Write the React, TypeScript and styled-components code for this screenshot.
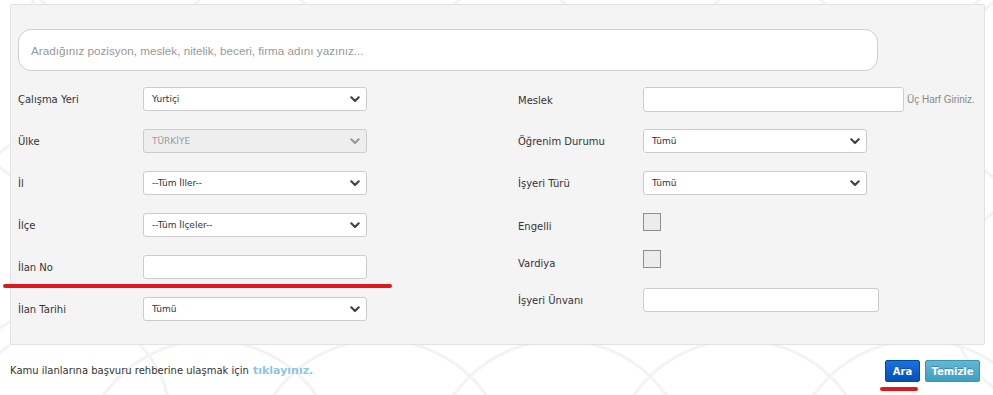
import React from "react";
import styled, { createGlobalStyle } from "styled-components";

const Global = createGlobalStyle`
  html, body { margin: 0; padding: 0; background: #ffffff; }
  body { font-family: "DejaVu Sans", Verdana, sans-serif; color: #333; }
  * { box-sizing: border-box; }
`;

const Page = styled.div`
  position: relative;
  width: 993px;
  height: 395px;
  overflow: hidden;
  background: #ffffff;
`;

const Pattern = styled.svg`
  position: absolute;
  inset: 0;
  z-index: 0;
  pointer-events: none;
`;

const Content = styled.div`
  position: relative;
  z-index: 1;
  padding-top: 4px;
`;

const Panel = styled.div`
  position: relative;
  margin-left: 10px;
  width: 975px;
  background: #f4f4f4;
  border: 1px solid #e2e2e2;
  border-radius: 2px;
  padding: 24px 7px 23px 7px;
`;

const Search = styled.input`
  display: block;
  width: 860px;
  height: 42px;
  border: 1px solid #cfcfcf;
  border-radius: 13px;
  background: #fff;
  padding: 0 12px;
  font-family: "Liberation Sans", Arial, sans-serif;
  font-size: 11.7px;
  color: #333;
  outline: none;
  &::placeholder { color: #999; }
`;

const Grid = styled.div`
  display: grid;
  grid-template-columns: 500px 1fr;
  margin-top: 16px;
`;

const Column = styled.div`
  display: flex;
  flex-direction: column;
`;

const Row = styled.div<{ $h: number; $mb: number; $top?: boolean }>`
  display: flex;
  align-items: ${(p) => (p.$top ? "flex-start" : "center")};
  height: ${(p) => p.$h}px;
  margin-bottom: ${(p) => p.$mb}px;
`;

const Label = styled.label<{ $shift?: number }>`
  width: 125px;
  flex: none;
  font-size: 10px;
  color: #333;
  padding-top: ${(p) => p.$shift ?? 2}px;
  line-height: 12px;
  white-space: nowrap;
`;

const SelectBox = styled.div<{ $w: number; $disabled?: boolean }>`
  position: relative;
  display: flex;
  align-items: center;
  width: ${(p) => p.$w}px;
  height: 24px;
  border: 1px solid #cccccc;
  border-radius: 3px;
  background: ${(p) => (p.$disabled ? "#eeeeee" : "#ffffff")};
  padding-left: 8px;
  font-size: 9px;
  color: ${(p) => (p.$disabled ? "#9a9a9a" : "#333")};
`;

const Chevron = styled.svg<{ $disabled?: boolean }>`
  position: absolute;
  right: 6px;
  top: 8px;
  width: 10px;
  height: 7px;
  stroke: ${(p) => (p.$disabled ? "#9a9a9a" : "#444")};
`;

const TextInput = styled.input<{ $w: number; $h?: number }>`
  width: ${(p) => p.$w}px;
  height: ${(p) => p.$h ?? 24}px;
  border: 1px solid #cccccc;
  border-radius: 3px;
  background: #fff;
  outline: none;
  padding: 0 6px;
`;

const Hint = styled.span`
  margin-left: 3px;
  font-family: "Liberation Sans", Arial, sans-serif;
  font-size: 10px;
  color: #888;
`;

const Check = styled.div`
  width: 18px;
  height: 18px;
  border: 1px solid #8f8f8f;
  background: #ececec;
  flex: none;
`;

const Mark = styled.div<{ $w: number; $l: number; $t: number }>`
  position: absolute;
  left: ${(p) => p.$l}px;
  top: ${(p) => p.$t}px;
  width: ${(p) => p.$w}px;
  height: 4px;
  border-radius: 2px;
  background: #e0181c;
  z-index: 5;
`;

const Footer = styled.div`
  display: flex;
  align-items: center;
  justify-content: space-between;
  height: 50px;
  padding: 0 13px 0 10px;
`;

const FooterText = styled.div`
  font-size: 10px;
  color: #333;
  display: flex;
  align-items: baseline;
  gap: 4px;
`;

const Link = styled.a`
  font-size: 11px;
  font-weight: bold;
  color: #8fc6e2;
  text-decoration: none;
`;

const Buttons = styled.div`
  display: flex;
  gap: 5px;
  margin-top: 2px;
`;

const Button = styled.button<{ $kind: "primary" | "info"; $w: number }>`
  width: ${(p) => p.$w}px;
  height: 22px;
  border-radius: 2px;
  border: 1px solid ${(p) => (p.$kind === "primary" ? "#0048a8" : "#3a95b5")};
  background: ${(p) =>
    p.$kind === "primary"
      ? "linear-gradient(#1a72dc, #0250b8)"
      : "linear-gradient(#62b8d4, #3d9ec0)"};
  color: #fff;
  font-family: "DejaVu Sans", Verdana, sans-serif;
  font-size: 10px;
  font-weight: bold;
  padding: 0;
  text-shadow: 0 -1px 0 rgba(0, 0, 0, 0.25);
`;

const Select = ({ value, w, disabled }: { value: string; w: number; disabled?: boolean }) => (
  <SelectBox $w={w} $disabled={disabled}>
    {value}
    <Chevron $disabled={disabled} viewBox="0 0 10 7" fill="none" strokeWidth={2.2} strokeLinecap="round" strokeLinejoin="round">
      <polyline points="1.3,1.3 5,5 8.7,1.3" />
    </Chevron>
  </SelectBox>
);

export default function App() {
  return (
    <Page>
      <Global />
      <Pattern width="993" height="395" viewBox="0 0 993 395" fill="none" stroke="#f3f3f3" strokeWidth="3">
        <circle cx="-60" cy="60" r="110" />
        <circle cx="-60" cy="260" r="110" />
        <circle cx="60" cy="420" r="110" />
        <circle cx="210" cy="470" r="130" />
        <circle cx="380" cy="470" r="130" />
        <circle cx="560" cy="470" r="130" />
        <circle cx="740" cy="470" r="130" />
        <circle cx="920" cy="470" r="130" />
        <circle cx="1060" cy="90" r="110" />
        <circle cx="1060" cy="300" r="110" />
        <circle cx="120" cy="-90" r="120" />
        <circle cx="380" cy="-90" r="120" />
        <circle cx="640" cy="-90" r="120" />
        <circle cx="900" cy="-90" r="120" />
      </Pattern>
      <Content>
        <Panel>
          <Search placeholder="Aradığınız pozisyon, meslek, nitelik, beceri, firma adını yazınız..." />
          <Grid>
            <Column>
              <Row $h={24} $mb={18}>
                <Label>Çalışma Yeri</Label>
                <Select value="Yurtiçi" w={224} />
              </Row>
              <Row $h={24} $mb={18}>
                <Label>Ülke</Label>
                <Select value="TÜRKİYE" w={224} disabled />
              </Row>
              <Row $h={24} $mb={18}>
                <Label>İl</Label>
                <Select value="--Tüm İller--" w={224} />
              </Row>
              <Row $h={24} $mb={18}>
                <Label>İlçe</Label>
                <Select value="--Tüm İlçeler--" w={224} />
              </Row>
              <Row $h={24} $mb={18}>
                <Label>İlan No</Label>
                <TextInput $w={224} />
              </Row>
              <Row $h={24} $mb={0}>
                <Label>İlan Tarihi</Label>
                <Select value="Tümü" w={224} />
              </Row>
            </Column>
            <Column>
              <Row $h={25} $mb={17}>
                <Label>Meslek</Label>
                <TextInput $w={261} $h={25} />
                <Hint>Üç Harf Giriniz.</Hint>
              </Row>
              <Row $h={24} $mb={18}>
                <Label>Öğrenim Durumu</Label>
                <Select value="Tümü" w={224} />
              </Row>
              <Row $h={24} $mb={18}>
                <Label>İşyeri Türü</Label>
                <Select value="Tümü" w={224} />
              </Row>
              <Row $h={18} $mb={19} $top>
                <Label $shift={8}>Engelli</Label>
                <Check />
              </Row>
              <Row $h={18} $mb={20} $top>
                <Label $shift={8}>Vardiya</Label>
                <Check />
              </Row>
              <Row $h={24} $mb={0}>
                <Label>İşyeri Ünvanı</Label>
                <TextInput $w={236} />
              </Row>
            </Column>
          </Grid>
        </Panel>
        <Footer>
          <FooterText>
            Kamu ilanlarına başvuru rehberine ulaşmak için
            <Link href="#">tıklayınız.</Link>
          </FooterText>
          <Buttons>
            <Button $kind="primary" $w={35}>Ara</Button>
            <Button $kind="info" $w={55}>Temizle</Button>
          </Buttons>
        </Footer>
      </Content>
      <Mark $l={3} $t={284} $w={389} />
      <Mark $l={880} $t={387} $w={38} />
    </Page>
  );
}
